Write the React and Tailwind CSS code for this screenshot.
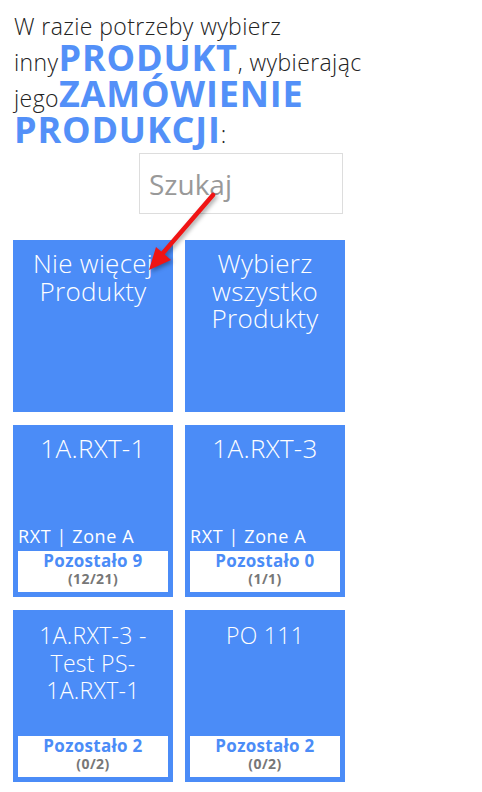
import React from "react";

const tiles = [
	{ title: "Nie więcej Produkty" },
	{ title: "Wybierz wszystko Produkty" },
	{ title: "1A.RXT-1", zone: "RXT | Zone A", left: 9, done: "12/21" },
	{ title: "1A.RXT-3", zone: "RXT | Zone A", left: 0, done: "1/1" },
	{ title: "1A.RXT-3 - Test PS-1A.RXT-1", left: 2, done: "0/2", small: true },
	{ title: "PO 111", left: 2, done: "0/2", small: true },
];

const Tile = ({ tile }) => {
	const { title, zone, left, done, small } = tile;
	return (
		<div className="bg-[#4b8cf7] h-[172px] flex flex-col pt-[10px] text-white">
			<p
				className={`${small ? "text-[23px] pt-[2px]" : "text-[26px]"} font-light leading-[27.5px] tracking-[0.3px] text-center px-[4px]`}
			>
				{title}
			</p>

			{zone && (
				<p className="mt-auto px-[5px] mb-[3px] text-[18px] leading-[24px] tracking-[0.6px]">
					{zone}
				</p>
			)}

			{left !== undefined && (
				<div
					className={`${zone ? "" : "mt-auto"} mx-[5px] mb-[5px] h-[41px] bg-white text-center`}
				>
					<p className="text-[17px] font-bold leading-[20px] tracking-[0.3px] text-[#4b8cf7]">
						Pozostało {left}
					</p>
					<p className="text-[14px] font-bold leading-[16px] tracking-[0.4px] text-[#777]">
						({done})
					</p>
				</div>
			)}
		</div>
	);
};

const Arrow = () => (
	<svg
		className="absolute left-0 top-0 pointer-events-none"
		width="482"
		height="792"
		style={{ filter: "drop-shadow(2px 2px 2px rgba(0,0,0,0.35))" }}
	>
		<line
			x1="213"
			y1="195"
			x2="163"
			y2="253"
			stroke="#f01414"
			strokeWidth="4.5"
			strokeLinecap="round"
		/>
		<polygon points="149,270 171,260 156,247" fill="#f01414" />
	</svg>
);

export default function App() {
	return (
		<div
			className="relative w-[482px] min-h-[792px] bg-white"
			style={{ fontFamily: '"Open Sans", sans-serif' }}
		>
			{/* Instruction */}
			<p className="pt-[8px] px-[14px] text-[23px] font-light leading-[36px] tracking-[0.4px] text-[#222]">
				W razie potrzeby wybierz inny
				<span className="text-[36px] font-bold leading-[28px] tracking-[0.8px] text-[#5390f8]">
					PRODUKT
				</span>
				, wybierając jego
				<span className="text-[36px] font-bold leading-[28px] tracking-[0.8px] text-[#5390f8]">
					ZAMÓWIENIE PRODUKCJI
				</span>
				:
			</p>

			{/* Search */}
			<div className="flex justify-center mt-[1px]">
				<div className="w-[204px] h-[61px] border border-[#dddddd] flex items-center px-[9px]">
					<span className="text-[28px] text-[#999]">Szukaj</span>
				</div>
			</div>

			{/* Tiles */}
			<div className="grid grid-cols-[160px_160px] gap-x-[12px] gap-y-[13px] ml-[13px] mt-[26px]">
				{tiles.map((tile, i) => (
					<Tile key={i} tile={tile} />
				))}
			</div>

			<Arrow />
		</div>
	);
}
